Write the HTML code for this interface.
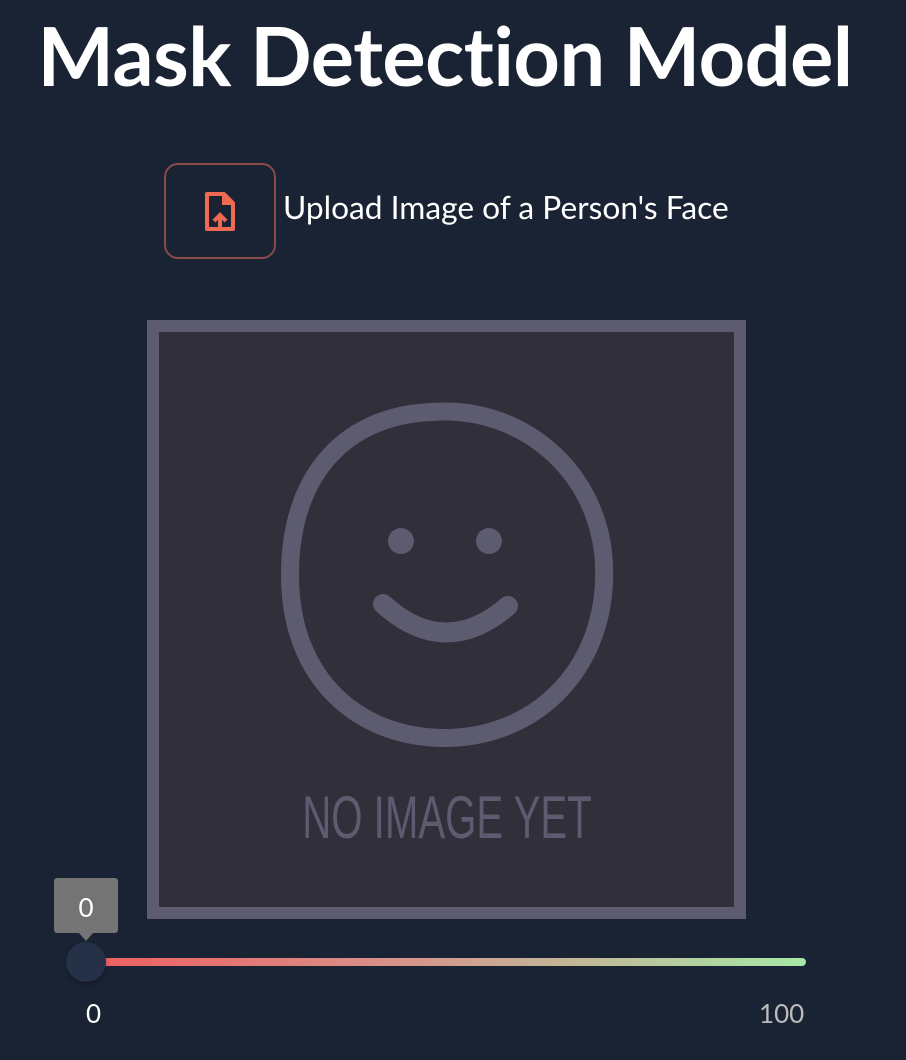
<!DOCTYPE html>
<html><head><meta charset="utf-8"><style>
body{margin:0;width:906px;height:1060px;background:#1a2333;position:relative;overflow:hidden;font-family:"Lato","Liberation Sans",sans-serif;color:#fff}
h1{position:absolute;left:-8px;width:906px;top:6px;margin:0;text-align:center;font-size:81px;font-weight:bold;line-height:100px;letter-spacing:-0.5px;white-space:nowrap}
.btn{position:absolute;left:164px;top:163px;width:108px;height:92px;border:2px solid #8a4a48;border-radius:14px}
.lbl{position:absolute;left:283px;top:189px;font-size:31.7px;line-height:36px}
.box{position:absolute;left:147px;top:320px;width:575px;height:575px;border:12px solid #5d5b6f;background:#302f3a}
.tip{position:absolute;left:54px;top:878px;width:64px;height:55px;background:#747474;border-radius:3px;font-size:26px;text-align:center;line-height:58px}
.tip:after{content:"";position:absolute;left:25px;top:55px;border:7px solid transparent;border-top:8px solid #747474}
.track{position:absolute;left:86px;top:958px;width:720px;height:8px;border-radius:4px;background:linear-gradient(90deg,#ef5d62,#d6958a 45%,#a6e8a8)}
.knob{position:absolute;left:66px;top:942px;width:40px;height:40px;border-radius:50%;background:#243147;box-shadow:0 2px 4px rgba(0,0,0,.3)}
.n{position:absolute;top:998px;font-size:26px;line-height:30px}
</style></head><body>
<h1>Mask Detection Model</h1>
<div class="btn"><svg style="position:absolute;left:38px;top:27px" width="32" height="40" viewBox="0 0 32 40"><path d="M3 2h17l9 9v26H3z" fill="none" stroke="#ee6a50" stroke-width="4" stroke-linejoin="round"/><path d="M18 2v11h11" fill="#ee6a50"/><path d="M16 36V25M10 29l6-6 6 6" fill="none" stroke="#ee6a50" stroke-width="4"/></svg></div>
<div class="lbl">Upload Image of a Person's Face</div>
<div class="box"><svg width="575" height="575" viewBox="159 332 575 575" style="position:absolute;left:0;top:0">
<path d="M432 412C520 405 600 470 604 565C608 665 540 735 450 738C360 740 290 680 290 575C290 470 350 415 432 412Z" fill="none" stroke="#5d5b6f" stroke-width="18"/>
<circle cx="401" cy="541" r="13" fill="#5d5b6f"/><circle cx="489" cy="541" r="13" fill="#5d5b6f"/>
<path d="M383 604Q445 660 508 606" fill="none" stroke="#5d5b6f" stroke-width="20" stroke-linecap="round"/>
<text x="447" y="838" text-anchor="middle" font-family="Liberation Sans Narrow, Liberation Sans, sans-serif" font-size="60" fill="#5d5b6f" transform="translate(447 0) scale(0.67 1) translate(-447 0)">NO IMAGE YET</text>
</svg></div>
<div class="track"></div>
<div class="knob"></div>
<div class="tip">0</div>
<div class="n" style="left:86px">0</div>
<div class="n" style="left:759px;color:#bbb">100</div>
</body></html>
